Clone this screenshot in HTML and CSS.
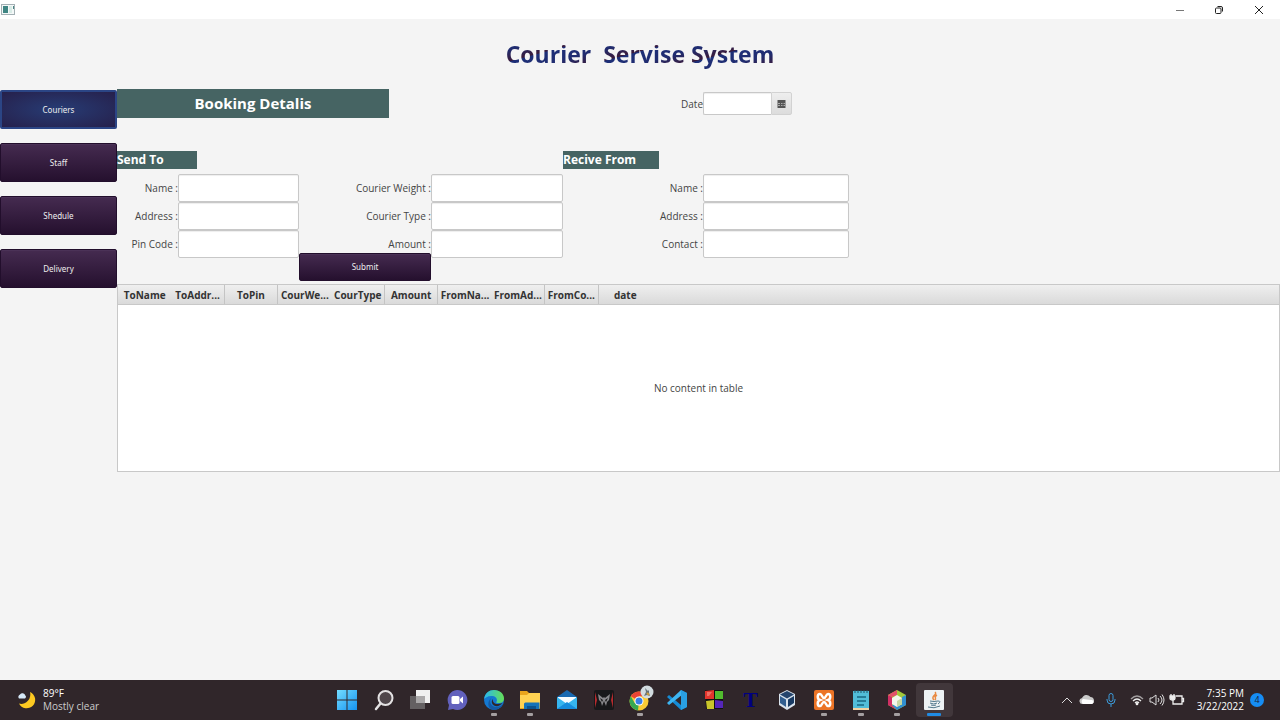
FILE: index.html
```html
<!DOCTYPE html>
<html lang="en">
<head>
<meta charset="utf-8">
<title>Courier Servise System</title>
<link rel="stylesheet" href="styles.css">
</head>
<body>
<div class="titlebar">
  <svg class="app-icon" viewBox="0 0 14 12"><rect x=".5" y=".5" width="13" height="10" fill="#f4f8f8" stroke="#a3b0b4"/><rect x="2" y="2" width="5" height="7" fill="#3f8583"/><rect x="8" y="2" width="3" height="7" fill="#d8ebe6"/><path d="M12.500 2v3" stroke="#4a8583"/></svg>
  <div class="window-controls">
    <button class="window-button" type="button" aria-label="Minimize"><svg viewBox="0 0 10 10"><path d="M1 5.500h8" stroke="#777"/></svg></button>
    <button class="window-button" type="button" aria-label="Restore"><svg viewBox="0 0 10 10" fill="none" stroke="#222"><rect x="1.500" y="3" width="5.500" height="5.500" rx="1"/><path d="M3.500 1.500h3.500q1.500 0 1.500 1.500v3.500"/></svg></button>
    <button class="window-button" type="button" aria-label="Close"><svg viewBox="0 0 10 10"><path d="M1 1l8 8M9 1l-8 8" stroke="#222"/></svg></button>
  </div>
</div>

<header class="page-header"><h1 class="page-title">Courier  Servise System</h1></header>

<div class="workspace">
  <nav class="sidebar">
    <button class="button nav-button nav-active" type="button">Couriers</button>
    <button class="button nav-button" type="button">Staff</button>
    <button class="button nav-button" type="button">Shedule</button>
    <button class="button nav-button" type="button">Delivery</button>
  </nav>
  <main class="content">
    <form class="booking">
      <div class="form-grid heading-row">
        <h2 class="banner">Booking Detalis</h2>
        <label class="label date-label" for="date">Date</label>
        <div class="date-picker">
          <input class="date-input" id="date" type="text">
          <button class="date-button" type="button" aria-label="Open calendar"><svg viewBox="0 0 9 8"><path d="M.5 0h8v8h-8z" fill="#555"/><path d="M1 3.500h2M4 3.500h1.500M6.500 3.500h1.500M1 5.500h2M4 5.500h1.500M6.500 5.500h1.500" stroke="#aaa"/></svg></button>
        </div>
      </div>
      <div class="form-grid section-row">
        <h3 class="section send">Send To</h3>
        <h3 class="section receive">Recive From</h3>
      </div>
      <div class="form-grid field-rows">
        <label class="label" for="to-name">Name :</label><input class="field" id="to-name" type="text">
        <label class="label" for="weight">Courier Weight :</label><input class="field" id="weight" type="text">
        <label class="label" for="from-name">Name :</label><input class="field" id="from-name" type="text">

        <label class="label" for="to-address">Address :</label><input class="field" id="to-address" type="text">
        <label class="label" for="type">Courier Type :</label><input class="field" id="type" type="text">
        <label class="label" for="from-address">Address :</label><input class="field" id="from-address" type="text">

        <label class="label" for="pin">Pin Code :</label><input class="field" id="pin" type="text">
        <label class="label" for="amount">Amount :</label><input class="field" id="amount" type="text">
        <label class="label" for="contact">Contact :</label><input class="field" id="contact" type="text">

        <button class="button submit" type="button">Submit</button>
      </div>
    </form>

    <section class="table-view">
      <div class="table-head">
        <table class="columns">
          <thead><tr><th>ToName</th><th>ToAddr...</th><th>ToPin</th><th>CourWe...</th><th>CourType</th><th>Amount</th><th>FromNa...</th><th>FromAd...</th><th>FromCo...</th><th>date</th></tr></thead>
        </table>
      </div>
      <p class="placeholder">No content in table</p>
    </section>
  </main>
</div>

<footer class="taskbar">
  <div class="weather">
    <svg class="weather-icon" viewBox="0 0 20 20"><path d="M13 2a8.500 8.500 0 1 1-11 11.500c5 2 13-3 11-11.500z" fill="#fcc921"/><path d="M2 8.500a2.500 2.500 0 0 1 1-4 3 3 0 0 1 5.300 1A1.800 1.800 0 0 1 8 8.500z" fill="#d5e8f7"/></svg>
    <div class="weather-text"><span>89°F</span><span class="muted">Mostly clear</span></div>
  </div>
  <div class="apps">
    <button class="app" type="button" aria-label="Start"><svg viewBox="0 0 22 22"><defs><linearGradient id="win" x2="1" y2="1"><stop stop-color="#73dcff"/><stop offset="1" stop-color="#1593f0"/></linearGradient></defs><path d="M1 1h9.500v9.500H1zM11.500 1H21v9.500h-9.500zM1 11.500h9.500V21H1zM11.500 11.500H21V21h-9.500z" fill="url(#win)"/></svg></button>
    <button class="app" type="button" aria-label="Search"><svg viewBox="0 0 22 22"><circle cx="12.500" cy="9" r="7" fill="#50474b" stroke="#e4e2e3" stroke-width="2"/><path d="M7.500 14.500L3 20" stroke="#e4e2e3" stroke-width="2.500" stroke-linecap="round"/></svg></button>
    <button class="app" type="button" aria-label="Task view"><svg viewBox="0 0 22 22"><path d="M7 1h14v13H7z" fill="#f0f0f0"/><path d="M1 7h15v13H1z" fill="#646062"/><path d="M7 7h9v7H7z" fill="#aaa8a9"/></svg></button>
    <button class="app" type="button" aria-label="Chat"><svg viewBox="0 0 22 22"><path d="M11 1a10 10 0 1 1-4 19l-5 1 1-5A10 10 0 0 1 11 1z" fill="#6261bd"/><rect x="5.500" y="7" width="8" height="8" rx="1.500" fill="#fff"/><path d="M14 10l3-2.500v7L14 12z" fill="#fff"/></svg></button>
    <button class="app running" type="button" aria-label="Edge"><svg viewBox="0 0 22 22"><defs><linearGradient id="edge" x2="1"><stop stop-color="#29b7ef"/><stop offset="1" stop-color="#66df56"/></linearGradient></defs><circle cx="11" cy="11" r="10" fill="#1478d1"/><path d="M1 10C2 4 6 1 11 1c6 0 10 4 10 8.500 0 4-4 5.500-8 4 2-2 1-6-3.500-6.500C5 6.500 2 9 1 10z" fill="url(#edge)"/><path d="M9 8c-4 4-1 10 4 10 3 0 5-1 7-3-2 4-6 6-10 6-5-1-7-8-1-13z" fill="#155aa4"/><path d="M10 10c-1 4 3 6.500 9.500 4-2 3-6 4-8.500 2.500-2.300-1.500-3-4.500-1-6.500z" fill="#30262a"/></svg></button>
    <button class="app running" type="button" aria-label="File explorer"><svg viewBox="0 0 22 22"><path d="M1 2h7l2 2h11v16H1z" fill="#e9a51d"/><path d="M1 6h7l2-2h11v15H1z" fill="#ffd252"/><path d="M5 20v-5q0-1.500 1.500-1.500h14V20z" fill="#1673b9"/><path d="M8 17h9v3H8z" fill="#0c538e"/></svg></button>
    <button class="app" type="button" aria-label="Mail"><svg viewBox="0 0 22 22"><path d="M1 8L11 1l10 7v12H1z" fill="#1769b2"/><path d="M2 8h18v10H2z" fill="#f5fbff"/><path d="M1 8l10 7L1 20zM21 8L11 15l10 5z" fill="#36b5ef"/><path d="M1 20l10-7 10 7z" fill="#168cdd"/></svg></button>
    <button class="app" type="button" aria-label="Game launcher"><svg viewBox="0 0 22 22"><rect x="1" y="1" width="20" height="20" rx="2" fill="#17181a"/><path d="M2 3l2 8-2 8zM20 3l-2 8 2 8z" fill="#b72a2e"/><path d="M5 5l5 4 1-1 1 1 5-4-1 6-2 2-1 4-2-5-2 5-1-4-2-2z" fill="#88888b"/><path d="M7 9l3 2-1 2zM15 9l-3 2 1 2z" fill="#17181a"/></svg></button>
    <button class="app running" type="button" aria-label="Chrome"><svg class="overflow" viewBox="0 0 22 22"><circle cx="10" cy="12" r="9.500" fill="#f9cb35"/><path d="M10 12L1.800 7.200A9.500 9.500 0 0 1 18.200 7.200H10z" fill="#e84435"/><path d="M10 12l-1 9.400A9.500 9.500 0 0 1 1.800 7.200l4 7z" fill="#36a852"/><circle cx="10" cy="12" r="4.500" fill="#fff"/><circle cx="10" cy="12" r="3.500" fill="#397fe5"/><circle cx="18" cy="3" r="6.500" fill="#d2dce0"/><path d="M15 7l2-4-1-4 3 3 1-1v3l1 3-3-1z" fill="#687477"/><path d="M18 4l2 2" stroke="#cc9d3c" stroke-width="2"/></svg></button>
    <button class="app" type="button" aria-label="Visual Studio Code"><svg viewBox="0 0 22 22"><path d="M15 1l6 3v14l-6 3L1 8l2-2 12 10z" fill="#168bd4"/><path d="M15 1L1 14l2 2L16 6z" fill="#3db5f2"/><path d="M15 1l6 3v14l-6 3z" fill="#299fe2"/></svg></button>
    <button class="app" type="button" aria-label="Color blocks"><svg viewBox="0 0 22 22"><path d="M2 1h18v19H3z" fill="#111"/><path d="M2 2l9-1v9H2z" fill="#e2352d"/><path d="M12 2h8v8h-8z" fill="#51bb2e"/><path d="M3 12l8-1v9H4z" fill="#c9c52b"/><path d="M12 11l8 1v7h-8z" fill="#5526b9"/><path d="M4 3h5l-3 4H4z" fill="#ed6f63"/></svg></button>
    <button class="app letter" type="button">T</button>
    <button class="app" type="button" aria-label="VirtualBox"><svg viewBox="0 0 22 22"><path d="M11 1l8 4v11l-8 5-8-5V5z" fill="#d9e3ed"/><path d="M11 2l7 3.500-7 4-7-4z" fill="#24446d"/><path d="M4 7l6 3.500v7.500l-6-4z" fill="#315e90"/><path d="M18 7l-6 3.500v7.500l6-4z" fill="#183a63"/></svg></button>
    <button class="app running" type="button" aria-label="XAMPP"><svg viewBox="0 0 22 22"><rect x="1" y="1" width="20" height="20" rx="2" fill="#ec7426"/><path d="M7 5C4 5 4 10 7 11c-3 1-3 6 0 6 2 0 2-4 4-4s2 4 4 4c3 0 3-5 0-6 3-1 3-6 0-6-2 0-2 4-4 4S9 5 7 5z" fill="none" stroke="#fff" stroke-width="2.500"/></svg></button>
    <button class="app running" type="button" aria-label="Notepad"><svg viewBox="0 0 22 22"><path d="M3 2h16v19H3z" fill="#51bdd8"/><path d="M3 19h16v2H3z" fill="#f1d3a2"/><path d="M7 8h9M7 12h9M7 16h7" stroke="#176781" stroke-width="1.500"/><path d="M5 1v3M8 1v3M11 1v3M14 1v3M17 1v3" stroke="#20546a"/></svg></button>
    <button class="app running" type="button" aria-label="NetBeans"><svg viewBox="0 0 22 22"><path d="M11 1l9 5v10l-9 5-9-5V6z" fill="#a4c93b"/><path d="M2 6l4 2v8l5 5-9-5z" fill="#d12f65"/><path d="M20 6l-4 2v8l-5 5 9-5zM11 21l-5-5 5-1 5 1z" fill="#318fd0"/><path d="M2 6l9-5v5L6 8z" fill="#e4516a"/><path d="M11 6l5 3v6l-5 3-5-3V9z" fill="#f4f7eb"/><path d="M11 12l5-3v6l-5 3z" fill="#c7d7a3"/></svg></button>
    <button class="app running active" type="button" aria-label="Java"><svg viewBox="0 0 22 22"><rect x="1" y="1" width="20" height="20" rx="1" fill="#edf2f4"/><path d="M12 3c3 3-5 4-1 8M14 6c-4 2 0 3-2 5" fill="none" stroke="#e98a42" stroke-width="1.500"/><path d="M7 12q4 1 8 0M7 14q4 2 7 0M8 16q3 1 5 0M5 18q6 2 12-1M15 12q4 0 0 3" fill="none" stroke="#52788c"/></svg></button>
  </div>
  <div class="tray">
    <svg class="tray-icon chevron" viewBox="0 0 16 16"><path d="M3 11l5-5 5 5" fill="none" stroke="#ddd"/></svg>
    <svg class="tray-icon cloud" viewBox="0 0 16 16"><path d="M4 12a3 3 0 0 1-1-6 5 5 0 0 1 8.500-1A3.700 3.700 0 0 1 13 12z" fill="#c9c9c9"/><path d="M4 12a3 3 0 0 1 0-5l8 1a2 2 0 0 1 1 4z" fill="#fff"/></svg>
    <svg class="tray-icon mic" viewBox="0 0 16 16" fill="none" stroke="#3c9ddd"><rect x="6" y="1.500" width="4" height="8" rx="2"/><path d="M4 7v1a4 4 0 0 0 8 0V7M8 12v3"/></svg>
    <svg class="tray-icon" viewBox="0 0 16 16" fill="none" stroke="#eee" stroke-width="1.300"><path d="M2 7q6-6 12 0" opacity=".6"/><path d="M4 9q4-4 8 0M6 11q2-2 4 0"/><circle cx="8" cy="12" r=".7" fill="#fff"/></svg>
    <svg class="tray-icon" viewBox="0 0 16 16" fill="none" stroke="#ddd"><path d="M1 6h2l4-3v10l-4-3H1zM9 6q2 2 0 4M11 4q4 4 0 8M13 2.500q4 5.500 0 11"/></svg>
    <svg class="tray-icon" viewBox="0 0 16 16" fill="none" stroke="#eee" stroke-width="1.300"><path d="M7 4h6v8H4V8M13 6.500h1.500v3H13M2 2v3M5 2v3"/><path d="M1 4h5v2q0 2-2.500 2T1 6z" fill="#eee"/></svg>
    <div class="clock"><span>7:35 PM</span><span>3/22/2022</span></div>
    <span class="badge">4</span>
  </div>
</footer>
</body>
</html>
```
FILE: styles.css
```css
* { box-sizing: border-box; }
body {
  margin: 0;
  min-height: 100vh;
  display: flex;
  flex-direction: column;
  background: #f4f4f4;
  color: #444;
  font-family: "Open Sans", "Noto Sans", sans-serif;
  font-size: 10px;
  line-height: 14px;
}
button, input { font: inherit; margin: 0; }
h1, h2, h3, p { margin: 0; }
svg { display: block; }

.titlebar {
  display: flex;
  justify-content: space-between;
  align-items: center;
  height: 19px;
  padding-left: 1px;
  background: #fff;
}
.app-icon { width: 14px; height: 12px; }
.window-controls { display: flex; }
.window-button {
  display: grid;
  place-items: center;
  width: 39px;
  height: 19px;
  padding: 0;
  border: 0;
  background: none;
}
.window-button svg { width: 10px; height: 10px; }
.window-button:last-child { width: 42px; }

.page-header {
  display: flex;
  justify-content: center;
  height: 70px;
  padding-top: 19px;
}
.page-title {
  font-size: 23px;
  line-height: 32px;
  white-space: pre;
  color: transparent;
  background: repeating-linear-gradient(165deg, #1d2f78 0, #202c70 12px, #3a1b3b 23px, #1d2f78 24px);
  background-clip: text;
  -webkit-background-clip: text;
}

.workspace { flex: 1; display: flex; align-items: flex-start; }
.sidebar {
  display: flex;
  flex-direction: column;
  gap: 14px;
  width: 117px;
  padding-top: 1px;
}
.button {
  border: 1px solid #220e2c;
  border-radius: 2px;
  background: linear-gradient(#452b50, #25102e);
  box-shadow: inset 0 1px #4b3257;
  color: #eee;
  font-family: "Noto Sans", sans-serif;
  font-size: 8px;
  line-height: 12px;
  padding: 0;
}
.nav-button { height: 39px; }
.nav-active {
  border: 2px solid #2b4585;
  background: radial-gradient(ellipse, #273c75, #26204b);
  box-shadow: none;
}
.content { flex: 1; min-width: 0; }

.form-grid {
  display: grid;
  grid-template-columns: 61px 121px 132px 132px 140px 146px;
}
.heading-row { grid-template-rows: 29px; margin-bottom: 33px; }
.section-row { margin-bottom: 5px; }
.field-rows { grid-template-rows: repeat(3, 28px) 26px; }
.banner {
  grid-column: 1 / 5;
  width: 272px;
  background: #466463;
  color: #fff;
  font-size: 15px;
  line-height: 29px;
  text-align: center;
}
.date-label { grid-column: 5; }
.date-picker { grid-column: 6; display: flex; align-self: center; width: 89px; height: 23px; }
.date-input, .field {
  min-width: 0;
  border: 1px solid #c8c8c8;
  border-radius: 2px;
  background: #fff;
  box-shadow: inset 0 1px 1px #eee;
  padding: 2px 6px;
}
.date-input { flex: 1; border-radius: 2px 0 0 2px; border-right: 0; }
.date-button {
  display: grid;
  place-items: center;
  width: 21px;
  padding: 0;
  border: 1px solid #d2d2d2;
  border-radius: 0 2px 2px 0;
  background: linear-gradient(#eee, #dcdcdc);
}
.date-button svg { width: 9px; height: 8px; }
.section {
  background: #466463;
  color: #fff;
  font-size: 12px;
  line-height: 18px;
}
.send { grid-column: 1 / 3; width: 80px; }
.receive { grid-column: 5; width: 96px; }
.label { align-self: center; text-align: right; white-space: nowrap; }
.submit { grid-column: 3; height: 28px; margin-top: -5px; }

.table-view { border: 1px solid #c8c8c8; background: #fff; }
.table-head {
  border-bottom: 1px solid #c8c8c8;
  background: linear-gradient(#efefef, #dadada);
}
.columns { width: 534px; table-layout: fixed; border-collapse: separate; border-spacing: 0; }
.columns th {
  height: 19px;
  padding: 1px 0 0;
  white-space: nowrap;
  color: #333;
  line-height: 18px;
}
.columns th:nth-child(2), .columns th:nth-child(3),
.columns th:nth-child(5), .columns th:nth-child(6),
.columns th:nth-child(8), .columns th:nth-child(9) { border-right: 1px solid #c4c4c4; }
.placeholder { padding: 76px 0; text-align: center; }

.taskbar {
  display: grid;
  grid-template-columns: 1fr 624px 1fr;
  align-items: center;
  height: 40px;
  padding-left: 1px;
  background: #30262a;
  color: #fff;
  line-height: 13px;
}
.weather { display: flex; align-items: center; gap: 6px; padding-left: 16px; }
.weather-icon { width: 20px; height: 20px; }
.weather-text { display: flex; flex-direction: column; }
.muted { color: #ccc; }
.apps { display: grid; grid-template-columns: repeat(17, 1fr); }
.app {
  position: relative;
  display: grid;
  place-items: center;
  height: 34px;
  padding: 0;
  border: 0;
  border-radius: 4px;
  background: none;
}
.app svg { width: 22px; height: 22px; }
.app .overflow { overflow: visible; }
.running::after {
  content: "";
  position: absolute;
  bottom: 1px;
  left: calc(50% - 3px);
  width: 6px;
  height: 3px;
  border-radius: 1px;
  background: #a49fa1;
}
.active { background: #41373b; }
.active::after { left: calc(50% - 7px); width: 14px; background: #208ce5; }
.app.letter { color: #000080; font: bold 22px/22px "Liberation Serif", serif; }
.tray { display: flex; align-items: center; justify-content: flex-end; padding-right: 16px; gap: 4px; }
.tray-icon { width: 16px; height: 16px; }
.mic { margin: 0 6px 0 4px; }
.clock { display: flex; flex-direction: column; width: 55px; text-align: right; white-space: nowrap; }
.badge {
  width: 14px;
  height: 14px;
  margin-left: 2px;
  border-radius: 50%;
  background: #168df4;
  color: #17243a;
  font-size: 9px;
  line-height: 14px;
  text-align: center;
}
```
